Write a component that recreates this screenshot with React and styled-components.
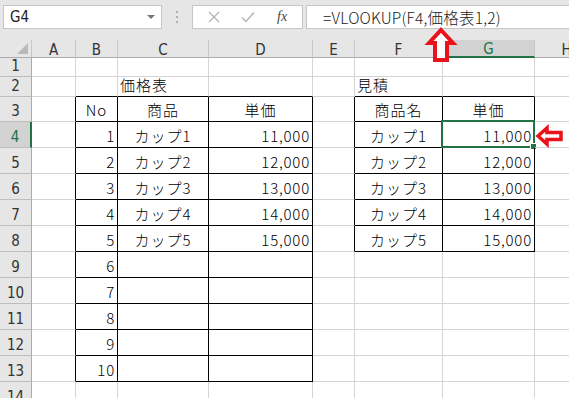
import styled, { createGlobalStyle } from "styled-components";

const GlobalStyle = createGlobalStyle`
  html, body {
    margin: 0;
    padding: 0;
    background: #ffffff;
  }
  body {
    font-family: "Noto Sans CJK JP", "Noto Sans", sans-serif;
  }
`;

const GREEN = "#217346";
const GRID = "#d4d4d4";

const COLS = [
  { key: "A", w: 44 },
  { key: "B", w: 42 },
  { key: "C", w: 91 },
  { key: "D", w: 104 },
  { key: "E", w: 42 },
  { key: "F", w: 88 },
  { key: "G", w: 92 },
  { key: "H", w: 64 },
];

const ROW_HEIGHTS = [19, 20, 25, 26, 26, 26, 26, 26, 26, 26, 26, 26, 26, 26];

const Page = styled.div`
  position: relative;
  width: 569px;
  height: 398px;
  overflow: hidden;
  background: #fff;
`;

const Toolbar = styled.div`
  height: 40px;
  box-sizing: border-box;
  background: #e6e6e6;
  display: flex;
  align-items: flex-start;
  padding: 5px 0 0 3px;
`;

const NameBox = styled.div`
  width: 159px;
  height: 24px;
  box-sizing: border-box;
  background: #fff;
  border: 1px solid #c6c6c6;
  display: flex;
  align-items: center;
  justify-content: space-between;
  padding: 0 6px 0 6px;
  font-family: "DejaVu Sans Condensed", "DejaVu Sans", sans-serif;
  font-weight: 300;
  font-size: 15px;
  color: #222;
`;

const DropArrow = styled.span`
  width: 0;
  height: 0;
  border-left: 4px solid transparent;
  border-right: 4px solid transparent;
  border-top: 4px solid #777;
`;

const Dots = styled.div`
  width: 30px;
  height: 24px;
  display: flex;
  flex-direction: column;
  align-items: center;
  justify-content: center;
  gap: 3px;

  span {
    width: 2px;
    height: 2px;
    background: #b0b0b0;
  }
`;

const FxButtons = styled.div`
  width: 111px;
  height: 24px;
  box-sizing: border-box;
  background: #fff;
  border: 1px solid #c6c6c6;
  display: flex;
  align-items: center;
  justify-content: space-around;
  padding: 0 4px;
  color: #b4b4b4;
`;

const Fx = styled.span`
  font-family: "Liberation Serif", serif;
  font-style: italic;
  font-size: 14px;
  color: #444;
`;

const FormulaBox = styled.div`
  flex: 1;
  margin-left: 3px;
  height: 24px;
  box-sizing: border-box;
  background: #fff;
  border: 1px solid #c6c6c6;
  border-right: none;
  display: flex;
  align-items: center;
  padding-left: 16px;
  font-size: 15.5px;
  font-weight: 300;
  letter-spacing: 0.2px;
  color: #222;
  white-space: nowrap;
`;

const Sheet = styled.div`
  display: grid;
  grid-template-columns: 32px ${COLS.map((c) => `${c.w}px`).join(" ")};
  grid-template-rows: 18px ${ROW_HEIGHTS.map((h) => `${h}px`).join(" ")};
`;

const Corner = styled.div`
  position: relative;
  background: #e6e6e6;
  border-right: 1px solid #c8c8c8;
  border-bottom: 1px solid #ababab;
  box-sizing: border-box;

  &::after {
    content: "";
    position: absolute;
    right: 3px;
    bottom: 3px;
    width: 0;
    height: 0;
    border-left: 11px solid transparent;
    border-bottom: 11px solid #b9b9b9;
  }
`;

const ColHead = styled.div`
  box-sizing: border-box;
  background: ${(p) => (p.$active ? "#d2d2d2" : "#e6e6e6")};
  border-right: 1px solid #c8c8c8;
  border-bottom: ${(p) => (p.$active ? `2px solid ${GREEN}` : "1px solid #ababab")};
  color: ${(p) => (p.$active ? GREEN : "#333")};
  font-family: "DejaVu Sans Condensed", "DejaVu Sans", sans-serif;
  font-weight: 300;
  font-size: 15px;
  display: flex;
  align-items: center;
  justify-content: center;
  padding-top: 2px;
`;

const RowHead = styled.div`
  box-sizing: border-box;
  background: ${(p) => (p.$active ? "#d2d2d2" : "#e6e6e6")};
  border-right: ${(p) => (p.$active ? `2px solid ${GREEN}` : "1px solid #ababab")};
  border-bottom: 1px solid #bdbdbd;
  color: ${(p) => (p.$active ? GREEN : "#333")};
  font-family: "DejaVu Sans Condensed", "DejaVu Sans", sans-serif;
  font-weight: 300;
  font-size: 15px;
  display: flex;
  align-items: flex-end;
  justify-content: center;
  padding-bottom: 1px;
  line-height: 18px;
`;

const Cell = styled.div`
  position: relative;
  box-sizing: border-box;
  border-right: 1px solid ${(p) => (p.$br ? "#000" : GRID)};
  border-bottom: 1px solid ${(p) => (p.$bb ? "#000" : GRID)};
  display: flex;
  align-items: flex-end;
  justify-content: ${(p) =>
    p.$align === "right" ? "flex-end" : p.$align === "center" ? "center" : "flex-start"};
  padding: 0 2px 2px 2px;
  font-size: 15px;
  font-weight: 300;
  line-height: 18px;
  color: #000;
  white-space: nowrap;
  letter-spacing: ${(p) => (p.$num ? "0.8px" : "1px")};
`;

const Selection = styled.div`
  position: absolute;
  left: -2px;
  top: -2px;
  right: -1px;
  bottom: -1px;
  border: 2px solid ${GREEN};
  pointer-events: none;

  &::after {
    content: "";
    position: absolute;
    right: -4px;
    bottom: -4px;
    width: 5px;
    height: 5px;
    background: ${GREEN};
    border: 1px solid #fff;
  }
`;

const Arrow = styled.svg`
  position: absolute;
  overflow: visible;
`;

const fmt = (n) => n.toLocaleString("en-US");

const buildCells = () => {
  const data = {};
  const set = (col, row, v) => {
    data[`${col}${row}`] = { ...(data[`${col}${row}`] || {}), ...v };
  };
  set("C", 2, { text: "価格表", align: "left" });
  set("F", 2, { text: "見積", align: "left" });
  set("B", 3, { text: "No", align: "center" });
  set("C", 3, { text: "商品", align: "center" });
  set("D", 3, { text: "単価", align: "center" });
  set("F", 3, { text: "商品名", align: "center" });
  set("G", 3, { text: "単価", align: "center" });
  for (let i = 1; i <= 10; i++) {
    const r = i + 3;
    set("B", r, { text: String(i), align: "right", num: true });
    if (i <= 5) {
      const price = fmt(10000 + i * 1000);
      set("C", r, { text: `カップ${i}`, align: "center" });
      set("D", r, { text: price, align: "right", num: true });
      set("F", r, { text: `カップ${i}`, align: "center" });
      set("G", r, { text: price, align: "right", num: true });
    }
  }
  return data;
};

const cells = buildCells();

const borderOf = (col, row) => {
  const inLeft = ["B", "C", "D"].includes(col) && row >= 3 && row <= 13;
  const inRight = ["F", "G"].includes(col) && row >= 3 && row <= 8;
  const br =
    inLeft || inRight || (col === "A" && row >= 3 && row <= 13) || (col === "E" && row >= 3 && row <= 8);
  const bb =
    inLeft || inRight || (["B", "C", "D", "F", "G"].includes(col) && row === 2);
  return { br, bb };
};

export default function App() {
  return (
    <Page>
      <GlobalStyle />
      <Toolbar>
        <NameBox>
          G4
          <DropArrow />
        </NameBox>
        <Dots>
          <span />
          <span />
          <span />
        </Dots>
        <FxButtons>
          <svg width="12" height="12" viewBox="0 0 12 12">
            <path d="M1 1 L11 11 M11 1 L1 11" stroke="#b4b4b4" strokeWidth="1.3" />
          </svg>
          <svg width="14" height="12" viewBox="0 0 14 12">
            <path d="M1 6.5 L5 10.5 L13 1.5" stroke="#b4b4b4" strokeWidth="1.5" fill="none" />
          </svg>
          <Fx>fx</Fx>
        </FxButtons>
        <FormulaBox>=VLOOKUP(F4,価格表1,2)</FormulaBox>
      </Toolbar>

      <Sheet>
        <Corner />
        {COLS.map((c) => (
          <ColHead key={c.key} $active={c.key === "G"}>
            {c.key}
          </ColHead>
        ))}
        {ROW_HEIGHTS.map((_, i) => {
          const row = i + 1;
          return [
            <RowHead key={`h${row}`} $active={row === 4}>
              {row}
            </RowHead>,
            ...COLS.map((c) => {
              const id = `${c.key}${row}`;
              const v = cells[id] || {};
              const { br, bb } = borderOf(c.key, row);
              return (
                <Cell key={id} $br={br} $bb={bb} $align={v.align} $num={v.num}>
                  {v.text}
                  {id === "G4" && <Selection />}
                </Cell>
              );
            }),
          ];
        })}
      </Sheet>

      <Arrow style={{ left: 427, top: 28 }} width="28" height="34" viewBox="0 0 28 34">
        <path
          d="M14 2 L26 15 L20 15 L20 32 L8 32 L8 15 L2 15 Z"
          fill="#fff"
          stroke="#e8131b"
          strokeWidth="4"
          strokeLinejoin="miter"
        />
      </Arrow>
      <Arrow style={{ left: 536, top: 126 }} width="27" height="20" viewBox="0 0 27 20">
        <path
          d="M2 10 L11 2 L11 6.5 L25 6.5 L25 13.5 L11 13.5 L11 18 Z"
          fill="#fff"
          stroke="#e8131b"
          strokeWidth="3.5"
          strokeLinejoin="miter"
        />
      </Arrow>
    </Page>
  );
}
